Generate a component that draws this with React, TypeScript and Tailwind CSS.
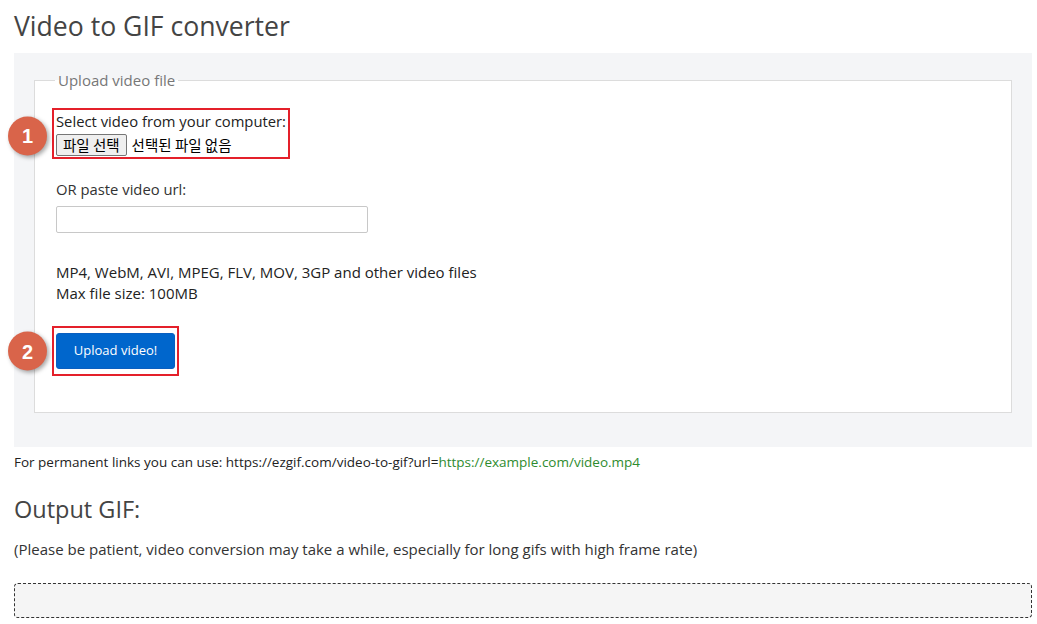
import React from 'react';

// Annotated step badge drawn over the form (screenshot callout)
function StepBadge({ n, className = 'top-1/2' }: { n: number; className?: string }) {
  return (
    <span
      className={`absolute left-[-46px] flex h-[39px] w-[39px] -translate-y-1/2 items-center justify-center rounded-full bg-[#d9644a] text-[20px] font-bold text-white shadow-[2px_2px_4px_rgba(0,0,0,0.35)] ${className}`}
      style={{ fontFamily: '"Liberation Sans", Arial, sans-serif' }}
    >
      {n}
    </span>
  );
}

const korean = { fontFamily: '"Noto Sans CJK KR", sans-serif' };

export default function App() {
  return (
    <div
      className="min-h-[624px] bg-white pl-[14px] pr-[5px] pt-[6px] text-[#333]"
      style={{ fontFamily: '"Open Sans", "Noto Sans CJK KR", sans-serif' }}
    >
      <h1 className="text-[26.6px] leading-[40px] text-[#444]">Video to GIF converter</h1>

      {/* Upload panel */}
      <div className="mt-[7px] bg-[#f4f5f7] px-[20px] pb-[34px] pt-[18px]">
        <fieldset className="border border-[#dcdcdc] bg-white pb-[36px] pl-[17px] pr-[20px] pt-[19px]">
          <legend className="ml-[3px] px-[3px] text-[15px] leading-[18px] text-[#777]">
            Upload video file
          </legend>

          <div className="relative inline-block border-2 border-[#e4202a] px-[2px] pb-[1px] pt-[1px]">
            <StepBadge n={1} className="top-[calc(50%+2px)]" />
            <div className="text-[14.8px] leading-[21px] text-[#222]">Select video from your computer:</div>
            <div className="mt-[2px] flex items-center gap-[5px]">
              <button
                className="h-[22px] rounded-[2px] border border-[#767676] bg-[#efefef] px-[6px] text-[14.5px] leading-[20px] text-black"
                style={korean}
              >
                파일 선택
              </button>
              <span className="text-[14.5px] leading-[20px] text-black" style={korean}>
                선택된 파일 없음
              </span>
            </div>
          </div>

          <div className="mt-[20px] pl-[4px]">
            <div className="text-[14.8px] leading-[20px] text-[#333]">OR paste video url:</div>
            <input
              type="text"
              className="mt-[7px] block h-[27px] w-[312px] rounded-[2px] border border-[#c8c8c8] bg-white outline-none"
            />
            <p className="mt-[29px] text-[15px] leading-[21px] text-[#222]">
              MP4, WebM, AVI, MPEG, FLV, MOV, 3GP and other video files
              <br />
              Max file size: 100MB
            </p>
          </div>

          <div className="relative mt-[22px] inline-block border-2 border-[#e4202a] px-[2px] py-[5px]">
            <StepBadge n={2} />
            <button className="block h-[36px] w-[119px] rounded-[3px] border border-[#0a5fc0] bg-[#0066cc] text-[13px] text-white">
              Upload video!
            </button>
          </div>
        </fieldset>
      </div>

      <p className="mt-[6px] text-[13.5px] leading-[18px] text-[#222]">
        For permanent links you can use: https://ezgif.com/video-to-gif?url=
        <span className="text-[#2e8b2e]">https://example.com/video.mp4</span>
      </p>

      <h2 className="mt-[23px] text-[23.5px] leading-[30px] text-[#444]">Output GIF:</h2>
      <p className="mt-[15px] text-[15px] leading-[20px] text-[#333]">
        (Please be patient, video conversion may take a while, especially for long gifs with high frame rate)
      </p>

      <div className="mt-[24px] h-[35px] rounded-[4px] border border-dashed border-[#333] bg-[#f5f5f5]" />
    </div>
  );
}
